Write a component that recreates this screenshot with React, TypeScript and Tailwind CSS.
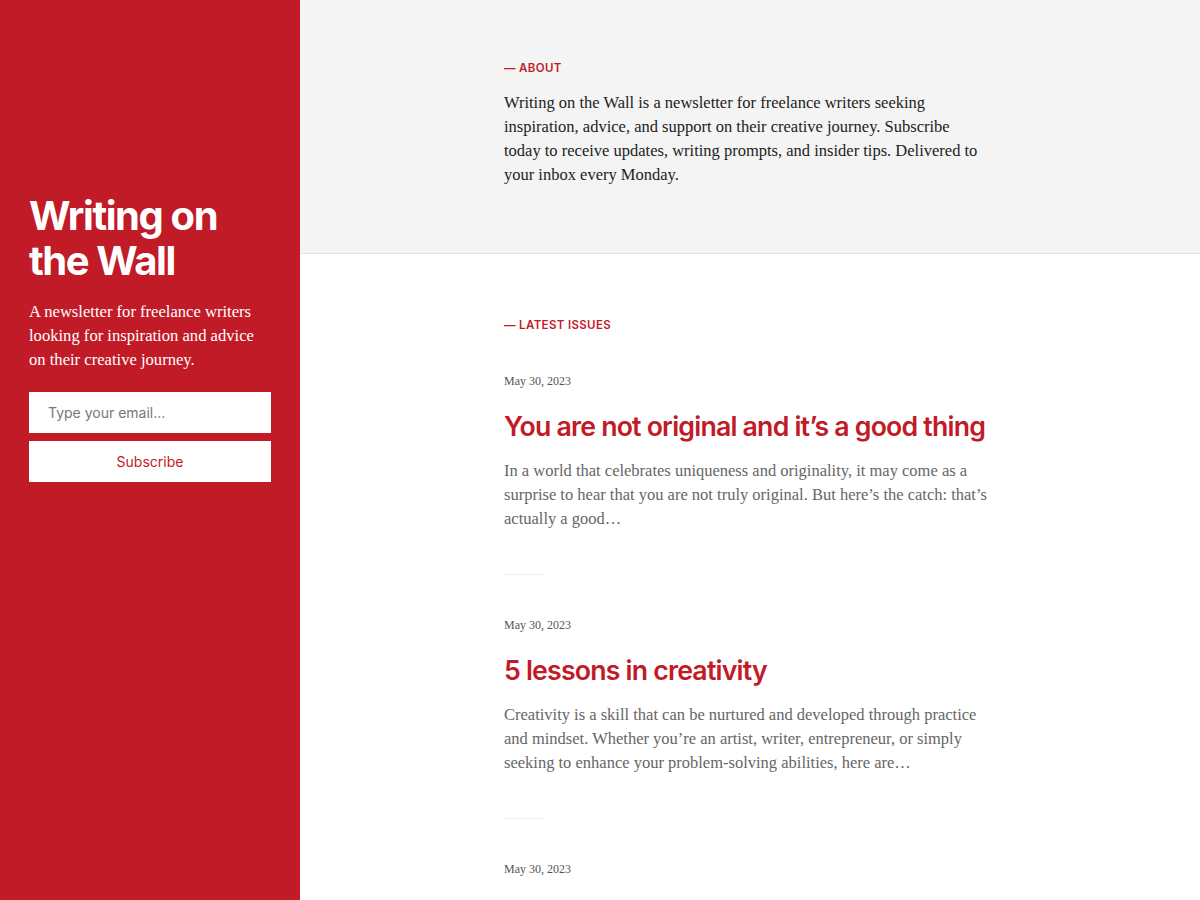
const issues = [
  {
    date: 'May 30, 2023',
    title: 'You are not original and it’s a good thing',
    excerpt:
      'In a world that celebrates uniqueness and originality, it may come as a surprise to hear that you are not truly original. But here’s the catch: that’s actually a good…',
  },
  {
    date: 'May 30, 2023',
    title: '5 lessons in creativity',
    excerpt:
      'Creativity is a skill that can be nurtured and developed through practice and mindset. Whether you’re an artist, writer, entrepreneur, or simply seeking to enhance your problem-solving abilities, here are…',
  },
  // only the date of the third issue shows above the fold
  { date: 'May 30, 2023' },
];

const serif = "font-['Liberation_Serif',serif]";
const sans = "font-['Inter',sans-serif]";

const Label = ({ children }: { children: string }) => (
  <div className={`${sans} text-[11.5px] leading-4 font-semibold tracking-[0.03em] uppercase text-[#c11b27]`}>
    — {children}
  </div>
);

export default function App() {
  return (
    <div className="flex h-screen overflow-hidden bg-white">
      <aside className="w-[300px] shrink-0 bg-[#c11b27] text-white px-[29px] pt-[193px]">
        <h1 className={`${sans} text-[40px] leading-[45px] font-bold tracking-[-0.035em]`}>
          Writing on the Wall
        </h1>
        <p className={`${serif} text-[16.6px] leading-6 mt-[17px] pr-2`}>
          A newsletter for freelance writers looking for inspiration and advice on their creative journey.
        </p>
        <form className="mt-[20px] flex flex-col gap-2" onSubmit={(e) => e.preventDefault()}>
          <input
            type="email"
            placeholder="Type your email..."
            className={`${sans} h-[41px] bg-white px-[19px] text-[14px] text-gray-800 placeholder:text-[#777] outline-none`}
          />
          <button className={`${sans} h-[41px] bg-white text-[14px] text-[#c11b27]`}>Subscribe</button>
        </form>
      </aside>

      <main className="flex-1 min-w-0">
        <section className="bg-[#f4f4f4] border-b border-[#e2e2e2] pt-[60px] pb-[66px]">
          <div className="w-[492px] mx-auto">
            <Label>About</Label>
            <p className={`${serif} w-[482px] text-[16.5px] leading-6 text-[#222] mt-[15px]`}>
              Writing on the Wall is a newsletter for freelance writers seeking inspiration, advice, and support on
              their creative journey. Subscribe today to receive updates, writing prompts, and insider tips. Delivered
              to your inbox every Monday.
            </p>
          </div>
        </section>

        <section className="pt-[63px]">
          <div className="w-[492px] mx-auto">
            <Label>Latest Issues</Label>
            <div className="mt-[40px] flex flex-col">
              {issues.map((issue, i) => (
                <article key={i} className="flex flex-col">
                  <div className={`${serif} text-[12px] leading-4 text-[#555]`}>{issue.date}</div>
                  {issue.title && (
                    <>
                      <h2
                        className={`${sans} mt-[19px] text-[26.7px] leading-9 font-semibold tracking-[-0.03em] text-[#c11b27]`}
                      >
                        {issue.title}
                      </h2>
                      <p className={`${serif} mt-[15px] text-[16.5px] leading-6 text-[#666]`}>{issue.excerpt}</p>
                      <div className="mt-[43px] mb-[42px] w-10 h-px bg-[#eeeeee]" />
                    </>
                  )}
                </article>
              ))}
            </div>
          </div>
        </section>
      </main>
    </div>
  );
}
